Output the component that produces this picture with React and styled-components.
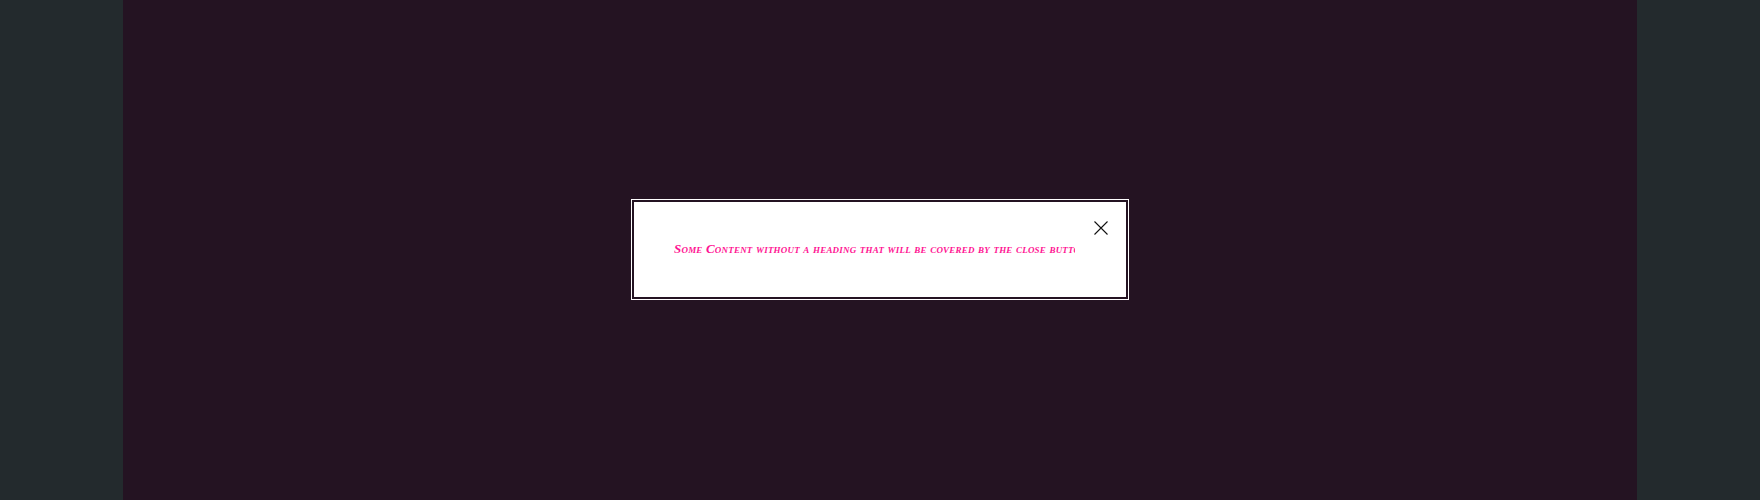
import React from 'react';
import styled, { createGlobalStyle } from 'styled-components';

const GlobalStyle = createGlobalStyle`
  html, body {
    margin: 0;
    padding: 0;
    background: #232a2d;
  }
`;

const Page = () => {
  return (
    <>
      <GlobalStyle />
      <Layout>
        <Side />
        <Main />
        <Side />
      </Layout>
      <Overlay>
        <Dialog role="dialog">
          <CloseButton aria-label="Close">
            <svg width="14" height="14" viewBox="0 0 14 14">
              <path d="M0.5 0.5 L13.5 13.5 M13.5 0.5 L0.5 13.5" stroke="#111" strokeWidth="1.1" fill="none" />
            </svg>
          </CloseButton>
          <Content>
            Some Content without a heading that will be covered by the close button
          </Content>
        </Dialog>
      </Overlay>
    </>
  );
};

const Layout = styled.div`
  display: grid;
  grid-template-columns: 123px 1fr 123px;
  height: 500px;
`;

const Side = styled.div`
  background: #232a2d;
`;

const Main = styled.main`
  background: #241322;
`;

const Overlay = styled.div`
  position: fixed;
  inset: 0;
  box-sizing: border-box;
  padding-bottom: 2px;
  display: flex;
  align-items: center;
  justify-content: center;
`;

const Dialog = styled.div`
  position: relative;
  box-sizing: border-box;
  width: 492px;
  height: 95px;
  background: #ffffff;
  outline: 1px solid #ffffff;
  outline-offset: 2px;
  display: flex;
  align-items: center;
  padding: 0 51px 0 40px;
`;

const Content = styled.p`
  margin: 0;
  width: 100%;
  overflow: hidden;
  white-space: nowrap;
  font-family: "Liberation Serif", serif;
  font-style: italic;
  font-weight: bold;
  font-variant: small-caps;
  font-size: 13px;
  letter-spacing: 0.2px;
  color: #ff1493;
`;

const CloseButton = styled.button`
  position: absolute;
  top: 19px;
  right: 18px;
  width: 14px;
  height: 14px;
  padding: 0;
  border: 0;
  background: none;
  display: flex;
  cursor: pointer;
`;

export default Page;
